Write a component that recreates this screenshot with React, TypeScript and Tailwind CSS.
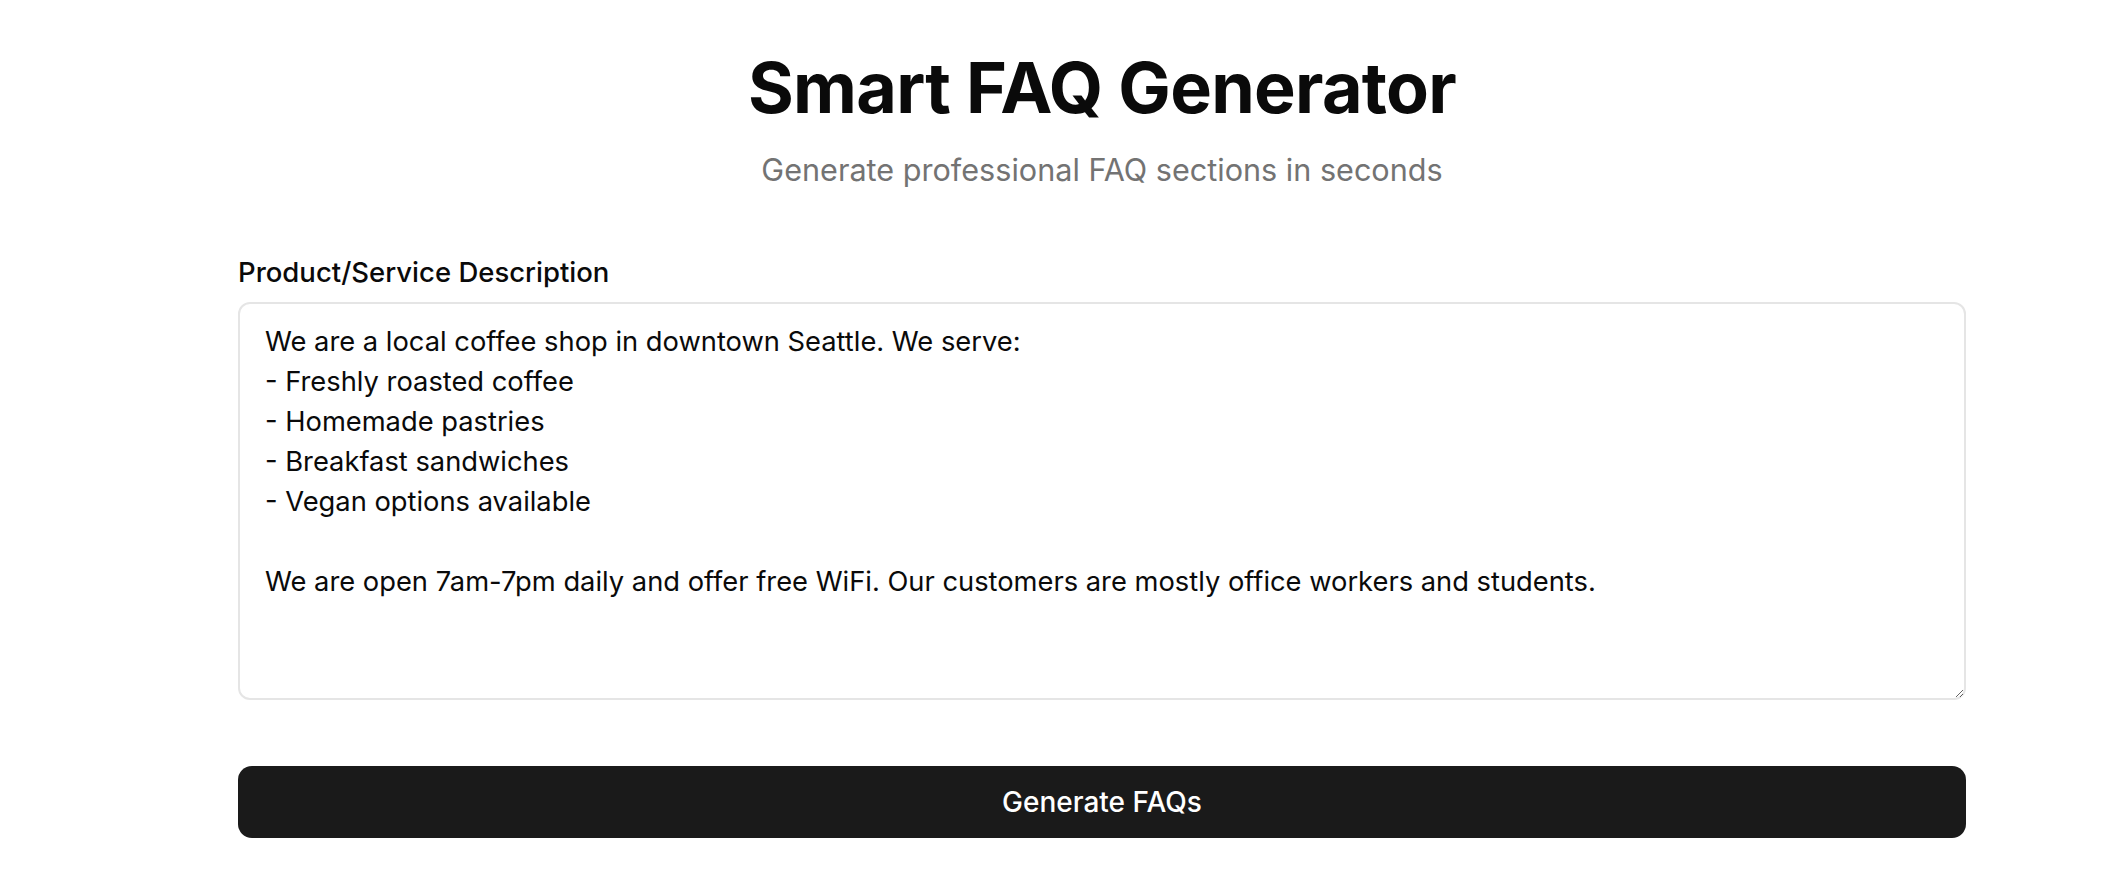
export default function App() {
  return (
    <div className="min-h-screen bg-white text-[#0a0a0a] [font-family:Inter,'Noto_Sans',sans-serif]">
      <main className="ml-[238px] w-[1728px] pt-[48px]">
        <header className="text-center">
          <h1 className="text-[70px] font-bold leading-[80px] tracking-[-0.01em]">Smart FAQ Generator</h1>
          <p className="mt-[22px] text-[30.6px] leading-[40px] text-[#737373]">
            Generate professional FAQ sections in seconds
          </p>
        </header>

        <section className="mt-[64px]">
          <label htmlFor="desc" className="block text-[27.5px] font-medium leading-[36px]">
            Product/Service Description
          </label>
          <textarea
            id="desc"
            className="mt-[12px] block h-[398px] w-full resize-y rounded-xl border-2 border-[#e5e5e5] px-[25px] py-[18px] text-[27.3px] leading-[40px] text-[#0a0a0a] outline-none"
            defaultValue={`We are a local coffee shop in downtown Seattle. We serve:
- Freshly roasted coffee
- Homemade pastries
- Breakfast sandwiches
- Vegan options available

We are open 7am-7pm daily and offer free WiFi. Our customers are mostly office workers and students.`}
          />
          <button
            type="button"
            className="mt-[66px] flex h-[72px] w-full items-center justify-center rounded-[14px] bg-[#1a1a1a] text-[28px] font-medium text-white"
          >
            Generate FAQs
          </button>
        </section>
      </main>
    </div>
  );
}
